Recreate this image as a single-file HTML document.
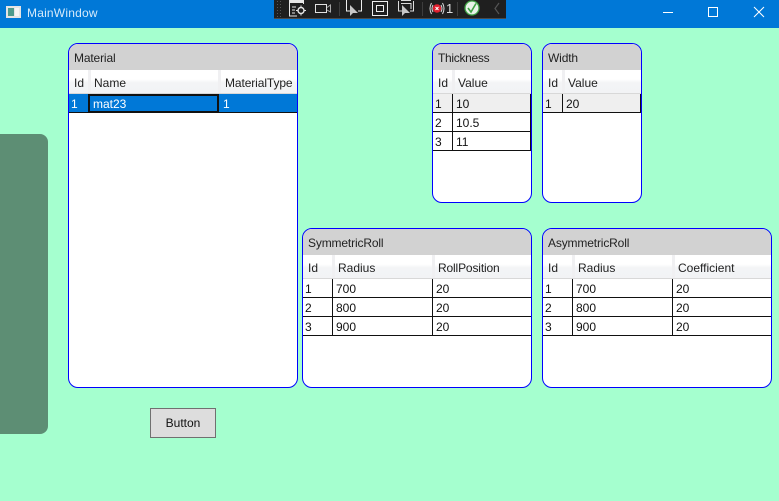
<!DOCTYPE html>
<html>
<head>
<meta charset="utf-8">
<style>
html,body{margin:0;padding:0;}
body{width:779px;height:501px;overflow:hidden;position:relative;background:#a5ffcf;font-family:"Liberation Sans",sans-serif;font-size:12px;color:#000;}
.a{position:absolute;}
#title{left:0;top:0;width:779px;height:28px;background:#0078d7;}
#ttext{left:27px;top:6px;color:#d6eafa;line-height:14px;font-size:12px;letter-spacing:.2px;}
.p{position:absolute;box-sizing:border-box;border:1px solid #0000ff;border-radius:10px;background:#fff;overflow:hidden;}
.cap{position:absolute;left:0;top:0;right:0;height:26px;background:#d2d2d2;color:#222;line-height:28px;padding-left:5px;white-space:nowrap;letter-spacing:-.15px;}
.hd{position:absolute;left:0;top:26px;right:0;background:linear-gradient(#fff 0,#fff 40%,#f3f4f6 55%,#f2f3f5 100%);border-bottom:1px solid #d8d8d8;height:23px;}
.hs{position:absolute;top:26px;width:3px;height:23px;background:#f0f0f2;}
.t{position:absolute;line-height:16px;white-space:nowrap;color:#111;}
.h{color:#222;}
.hl{position:absolute;left:0;right:0;height:1px;background:#111;}
.vl{position:absolute;width:1px;background:#111;}
#side{left:0;top:134px;width:48px;height:300px;background:#5d8e74;border-radius:0 8px 8px 0;}
#btn{left:150px;top:408px;width:66px;height:30px;box-sizing:border-box;background:#dddddd;border:1px solid #707070;text-align:center;line-height:29px;color:#111;}
</style>
</head>
<body>
<div class="a" id="title"></div>
<svg class="a" style="left:0;top:0" width="30" height="28" viewBox="0 0 30 28">
<rect x="6" y="6" width="15" height="12" fill="#e4e4e4"/>
<rect x="8" y="8" width="6" height="8" fill="#4d9a8c"/>
<rect x="15" y="8" width="4" height="8" fill="#f4f4f4"/>
</svg>
<div class="a" id="ttext">MainWindow</div>

<svg class="a" style="left:650px;top:0" width="129" height="28" viewBox="650 0 129 28" fill="none" stroke="#fff" stroke-width="1">
<path d="M663 12.5H673"/>
<rect x="708.5" y="7.5" width="9" height="9"/>
<path d="M754 7L764 17M764 7L754 17"/>
</svg>

<svg class="a" style="left:274px;top:0" width="232" height="19" viewBox="274 0 232 19" fill="none">
<rect x="274" y="0" width="232" height="18" fill="#1f1f1f"/>
<rect x="274" y="18" width="232" height="1" fill="#4a4a4a"/>
<path d="M277.5 1V17M280.5 1V17" stroke="#555" stroke-dasharray="1 2"/>
<path d="M297 16H289.5V0M303.5 0V4" stroke="#e6e6e6"/>
<rect x="290" y="0" width="13" height="3" fill="#e6e6e6"/>
<path d="M292 7H296M292 10H295M292 13H295" stroke="#e6e6e6"/>
<circle cx="301" cy="10.5" r="3" stroke="#e6e6e6" stroke-width="1.4"/>
<path d="M301 5.5V8M301 13V15.5M296 10.5H298.5M303.5 10.5H306" stroke="#e6e6e6"/>
<rect x="315.5" y="4.5" width="11" height="8" stroke="#e0e0e0"/>
<path d="M327 7.5L330.5 5V12L327 10" stroke="#aaa"/>
<rect x="339" y="2" width="1" height="14" fill="#3d3d3d"/>
<path d="M350 11H346.5V0M361.5 0V11H358" stroke="#eee"/>
<path d="M350 5L350 16L353 13L358 13Z" fill="#c8c8c8"/>
<rect x="372.5" y="1.5" width="15" height="14" stroke="#eee"/>
<rect x="376.5" y="5.5" width="7" height="6" stroke="#eee"/>
<path d="M398.5 1V11H402M413.5 1V11H410M401 0.5H411M401 3.5H411V9" stroke="#ddd"/>
<path d="M402 5L402 16L405 13L410 13Z" fill="#c8c8c8"/>
<rect x="422" y="2" width="1" height="14" fill="#3d3d3d"/>
<circle cx="437" cy="8.5" r="4.2" fill="#e01f2e"/>
<path d="M435.5 7L438.5 10M438.5 7L435.5 10" stroke="#fff"/>
<path d="M431.5 3Q428.5 8.5 431.5 14M442.5 3Q445.5 8.5 442.5 14M433 5Q431 8.5 433 12M441 5Q443 8.5 441 12" stroke="#ddd"/>
<rect x="457" y="2" width="1" height="14" fill="#3d3d3d"/>
<circle cx="472" cy="8" r="7" fill="#e8f2e8" stroke="#3fa244" stroke-width="1.3"/>
<path d="M468 8L471 12L476 3.5" stroke="#3fa244" stroke-width="1.6"/>
<path d="M499 3L495 8.5L499 14" stroke="#555" stroke-width="1.2"/>
</svg>
<div class="a" style="left:446px;top:1px;line-height:15px;color:#ddd;font-size:13px;">1</div>

<div class="a" id="side"></div>

<!-- Material -->
<div class="p" style="left:68px;top:43px;width:230px;height:345px;">
<div class="cap">Material</div>
<div class="hd"></div>
<div class="hs" style="left:19px"></div>
<div class="hs" style="left:149px"></div>
<div class="t h" style="left:5px;top:31px">Id</div>
<div class="t h" style="left:25px;top:31px">Name</div>
<div class="t h" style="left:156px;top:31px;letter-spacing:-.1px">MaterialType</div>
<div class="a" style="left:0;top:50px;width:228px;height:18px;background:#0078d7;"></div>
<div class="hl" style="top:68px"></div>
<div class="a" style="left:19px;top:50px;width:131px;height:19px;box-sizing:border-box;border:2px solid #111;"></div>
<div class="t" style="left:2px;top:52px;color:#fff">1</div>
<div class="t" style="left:24px;top:52px;color:#fff">mat23</div>
<div class="t" style="left:154px;top:52px;color:#fff">1</div>
</div>

<!-- Thickness -->
<div class="p" style="left:432px;top:43px;width:100px;height:160px;">
<div class="cap" style="letter-spacing:-.3px">Thickness</div>
<div class="hd"></div>
<div class="hs" style="left:19px"></div>
<div class="t h" style="left:5px;top:31px">Id</div>
<div class="t h" style="left:25px;top:31px">Value</div>
<div class="a" style="left:0;top:50px;width:97px;height:18px;background:#efefef;"></div>
<div class="hl" style="top:68px;right:1px"></div>
<div class="hl" style="top:87px;right:1px"></div>
<div class="hl" style="top:106px;right:1px"></div>
<div class="vl" style="left:19px;top:50px;height:57px"></div>
<div class="vl" style="left:97px;top:50px;height:57px"></div>
<div class="t" style="left:2px;top:52px">1</div><div class="t" style="left:23px;top:52px">10</div>
<div class="t" style="left:2px;top:71px">2</div><div class="t" style="left:23px;top:71px">10.5</div>
<div class="t" style="left:2px;top:90px">3</div><div class="t" style="left:23px;top:90px">11</div>
</div>

<!-- Width -->
<div class="p" style="left:542px;top:43px;width:100px;height:160px;">
<div class="cap">Width</div>
<div class="hd"></div>
<div class="hs" style="left:19px"></div>
<div class="t h" style="left:5px;top:31px">Id</div>
<div class="t h" style="left:25px;top:31px">Value</div>
<div class="a" style="left:0;top:50px;width:97px;height:18px;background:#efefef;"></div>
<div class="hl" style="top:68px;right:1px"></div>
<div class="vl" style="left:19px;top:50px;height:19px"></div>
<div class="vl" style="left:97px;top:50px;height:19px"></div>
<div class="t" style="left:2px;top:52px">1</div><div class="t" style="left:23px;top:52px">20</div>
</div>

<!-- SymmetricRoll -->
<div class="p" style="left:302px;top:228px;width:230px;height:160px;">
<div class="cap">SymmetricRoll</div>
<div class="hd"></div>
<div class="hs" style="left:29px"></div>
<div class="hs" style="left:129px"></div>
<div class="t h" style="left:5px;top:31px">Id</div>
<div class="t h" style="left:35px;top:31px">Radius</div>
<div class="t h" style="left:135px;top:31px;letter-spacing:-.15px">RollPosition</div>
<div class="hl" style="top:68px"></div>
<div class="hl" style="top:87px"></div>
<div class="hl" style="top:106px"></div>
<div class="vl" style="left:29px;top:50px;height:57px"></div>
<div class="vl" style="left:129px;top:50px;height:57px"></div>
<div class="t" style="left:2px;top:52px">1</div><div class="t" style="left:33px;top:52px">700</div><div class="t" style="left:133px;top:52px">20</div>
<div class="t" style="left:2px;top:71px">2</div><div class="t" style="left:33px;top:71px">800</div><div class="t" style="left:133px;top:71px">20</div>
<div class="t" style="left:2px;top:90px">3</div><div class="t" style="left:33px;top:90px">900</div><div class="t" style="left:133px;top:90px">20</div>
</div>

<!-- AsymmetricRoll -->
<div class="p" style="left:542px;top:228px;width:230px;height:160px;">
<div class="cap">AsymmetricRoll</div>
<div class="hd"></div>
<div class="hs" style="left:29px"></div>
<div class="hs" style="left:129px"></div>
<div class="t h" style="left:5px;top:31px">Id</div>
<div class="t h" style="left:35px;top:31px">Radius</div>
<div class="t h" style="left:135px;top:31px">Coefficient</div>
<div class="hl" style="top:68px"></div>
<div class="hl" style="top:87px"></div>
<div class="hl" style="top:106px"></div>
<div class="vl" style="left:29px;top:50px;height:57px"></div>
<div class="vl" style="left:129px;top:50px;height:57px"></div>
<div class="t" style="left:2px;top:52px">1</div><div class="t" style="left:33px;top:52px">700</div><div class="t" style="left:133px;top:52px">20</div>
<div class="t" style="left:2px;top:71px">2</div><div class="t" style="left:33px;top:71px">800</div><div class="t" style="left:133px;top:71px">20</div>
<div class="t" style="left:2px;top:90px">3</div><div class="t" style="left:33px;top:90px">900</div><div class="t" style="left:133px;top:90px">20</div>
</div>

<div class="a" id="btn">Button</div>
</body>
</html>
